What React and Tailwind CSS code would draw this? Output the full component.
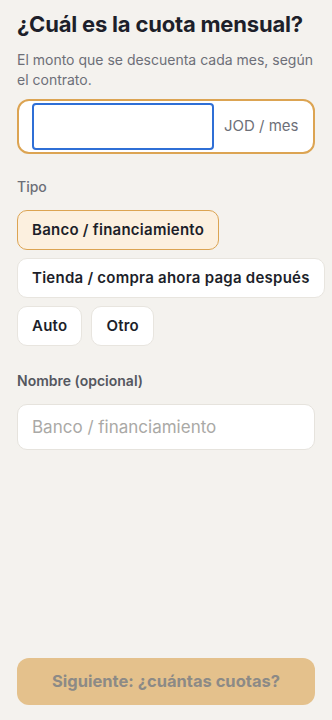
export default function App() {
  const tipos = ['Banco / financiamiento', 'Tienda / compra ahora paga después', 'Auto', 'Otro'];
  const selected = 0;
  return (
    <div
      className="w-[332px] h-[720px] bg-[#f4f2ee] flex flex-col px-[17px] pt-[10px] pb-[15px]"
      style={{ fontFamily: 'Inter, "Noto Sans", sans-serif' }}
    >
      <h1 className="text-[22px] leading-[28px] font-bold text-[#1d1f2a] tracking-[-0.2px]">¿Cuál es la cuota mensual?</h1>
      <p className="mt-[12px] text-[14px] leading-[20px] text-[#6d6f78]">
        El monto que se descuenta cada mes, según el contrato.
      </p>

      <div className="mt-[9px] h-[55px] rounded-[12px] border-2 border-[#dca452] bg-white flex items-center pl-[13px] pr-[13px] gap-[10px]">
        <input
          type="text"
          className="w-[182px] h-[47px] rounded-[4px] border-2 border-[#2f6fd6] bg-white outline-none px-2 text-[16px]"
        />
        <span className="text-[15px] text-[#6d6f78]">JOD / mes</span>
      </div>

      <div className="mt-[23px] text-[14px] leading-[20px] text-[#6d6f78] font-medium">Tipo</div>

      <div className="mt-[13px] flex flex-wrap gap-x-[9px] gap-y-[8px]">
        {tipos.map((t, i) => (
          <button
            key={t}
            className={
              i === selected
                ? 'h-[40px] px-[14px] whitespace-nowrap rounded-[10px] border-[1.5px] border-[#dca452] bg-[#fcf0df] text-[15px] tracking-[0.25px] font-semibold text-[#1d1f2a]'
                : 'h-[40px] px-[14px] whitespace-nowrap rounded-[10px] border border-[#e8e5df] bg-white text-[15px] tracking-[0.25px] font-semibold text-[#1d1f2a]'
            }
          >
            {t}
          </button>
        ))}
      </div>

      <div className="mt-[25px] text-[14px] leading-[20px] font-semibold text-[#55575f]">Nombre (opcional)</div>
      <input
        type="text"
        placeholder="Banco / financiamiento"
        className="mt-[13px] h-[46px] w-full rounded-[10px] border border-[#e6e3dd] bg-white px-[14px] text-[17px] text-[#1d1f2a] placeholder:text-[#aaa9a6] outline-none"
      />

      <div className="flex-1" />

      <button className="h-[47px] w-full rounded-[12px] bg-[#e4c18c] text-[16.5px] font-bold text-[#8c8a86]">
        Siguiente: ¿cuántas cuotas?
      </button>
    </div>
  );
}
